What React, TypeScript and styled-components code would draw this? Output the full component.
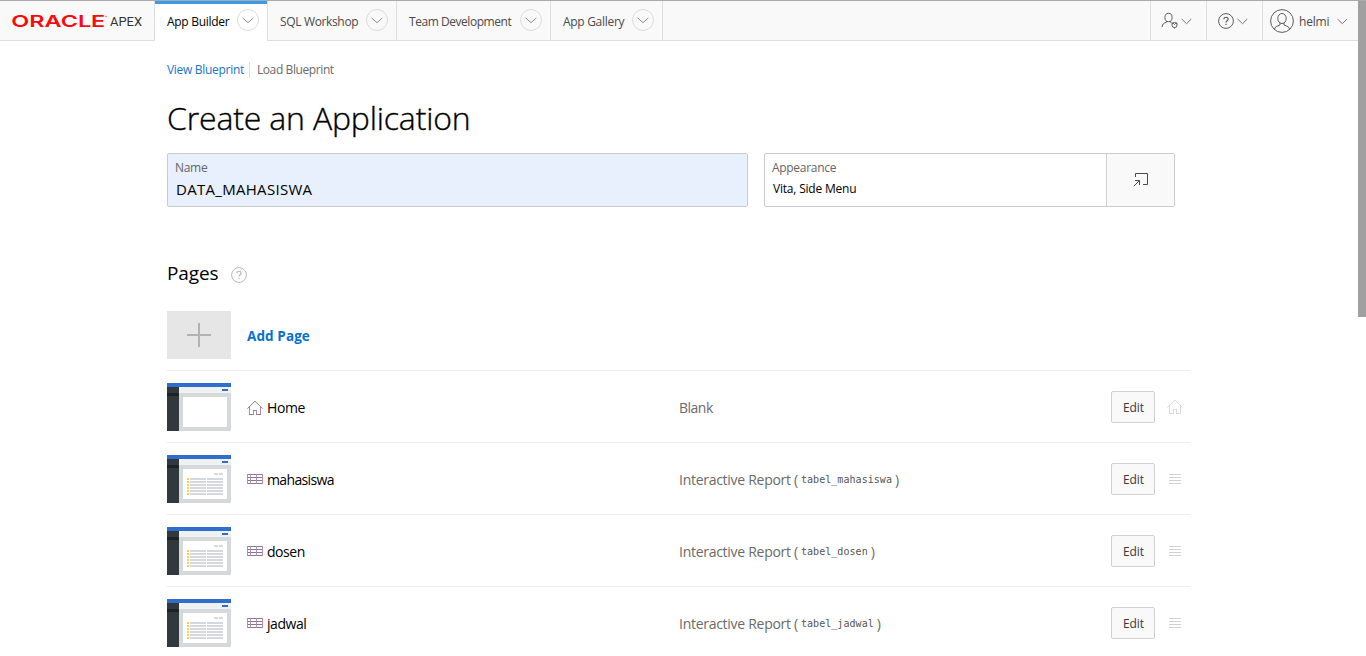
import React from "react";
import styled, { createGlobalStyle } from "styled-components";

const GlobalStyle = createGlobalStyle`
  * { box-sizing: border-box; }
  html, body { margin: 0; height: 100%; overflow: hidden; background: #fff; }
  body { font-family: "Open Sans", "Noto Sans", sans-serif; font-size: 12px; color: #000; }
`;

const Text = styled.span<{ $size?: number; $color?: string; $ls?: number; $weight?: number }>`
  font-size: ${(p) => p.$size ?? 12}px;
  color: ${(p) => p.$color ?? "inherit"};
  letter-spacing: ${(p) => p.$ls ?? 0}px;
  font-weight: ${(p) => p.$weight ?? 400};
  white-space: nowrap;
`;

const Screen = styled.div`
  display: flex;
  width: 1366px;
  height: 656px;
  overflow: hidden;
  border-top: 1px solid #ababab;
`;
const Page = styled.div`
  width: 1358px;
  flex: none;
`;
const ScrollTrack = styled.div`
  width: 8px;
  background: #fff;
`;
const ScrollThumb = styled.div`
  height: 316px;
  background: #a0a0a0;
`;

const Header = styled.header`
  display: flex;
  height: 40px;
  background: #f9f9f9;
`;
const Brand = styled.div`
  width: 155px;
  padding: 8px 0 0 11px;
  border-right: 1px solid #dfdfdf;
  border-bottom: 1px solid #dfdfdf;
`;
const Tab = styled.div<{ $width: number; $active?: boolean }>`
  width: ${(p) => p.$width}px;
  display: flex;
  justify-content: space-between;
  padding: 10px 8px 0 12px;
  line-height: 21px;
  color: ${(p) => (p.$active ? "#000" : "#4a4a4a")};
  background: ${(p) => (p.$active ? "#fff" : "transparent")};
  box-shadow: ${(p) => (p.$active ? "inset 0 3px 0 #3b9bea" : "none")};
  border-right: 1px solid #dfdfdf;
  border-bottom: ${(p) => (p.$active ? "none" : "1px solid #dfdfdf")};
`;
const RoundButton = styled.span`
  width: 22px;
  height: 22px;
  margin-top: -2px;
  border: 1px solid #dcdcdc;
  border-radius: 50%;
  display: flex;
  align-items: center;
  justify-content: center;
`;
const HeaderFill = styled.div`
  flex: 1;
  border-bottom: 1px solid #dfdfdf;
`;
const Tool = styled.div<{ $width: number; $gap?: number; $pad?: number }>`
  width: ${(p) => p.$width}px;
  display: flex;
  align-items: center;
  gap: ${(p) => p.$gap ?? 2}px;
  padding-top: 1px;
  padding-left: ${(p) => p.$pad ?? 10}px;
  border-left: 1px solid #dfdfdf;
  border-bottom: 1px solid #dfdfdf;
`;

const Main = styled.main`
  width: 1024px;
  margin-left: 167px;
`;
const Links = styled.nav`
  display: flex;
  align-items: center;
  padding-top: 20px;
  height: 37px;
`;
const LinkDivider = styled.span`
  width: 1px;
  height: 16px;
  margin: 0 7px 0 5px;
  background: #dcdcdc;
`;
const Title = styled.h1`
  margin: 17px 0 0;
  height: 58px;
  line-height: 46px;
  font-weight: 400;
  -webkit-text-stroke: 0.35px #000;
`;
const Fields = styled.div`
  display: flex;
  gap: 16px;
`;
const Field = styled.div<{ $width: number; $filled?: boolean }>`
  width: ${(p) => p.$width}px;
  height: 54px;
  display: flex;
  border: 1px solid #cbcbcb;
  border-radius: 2px;
  background: ${(p) => (p.$filled ? "#e8f0fe" : "#fff")};
`;
const FieldBody = styled.div`
  flex: 1;
  display: flex;
  flex-direction: column;
  padding: 5px 7px;
`;
const FieldLabel = styled.label`
  height: 19px;
  line-height: 17px;
`;
const FieldValue = styled.div`
  height: 22px;
  line-height: 22px;
  padding-left: 1px;
`;
const PickButton = styled.div`
  width: 68px;
  display: flex;
  align-items: center;
  justify-content: center;
  border-left: 1px solid #d0d0d0;
  background: #f9f9f9;
`;
const SectionHead = styled.div`
  display: flex;
  align-items: center;
  gap: 12px;
  height: 30px;
  margin-top: 51px;
`;
const HelpMark = styled.span`
  display: flex;
  padding-top: 4px;
`;
const List = styled.div`
  margin-top: 11px;
`;
const Row = styled.div`
  display: flex;
  align-items: center;
  height: 72px;
  border-bottom: 1px solid #ededed;
`;
const AddTile = styled.div`
  width: 64px;
  height: 48px;
  background: #e6e6e6;
  display: flex;
  align-items: center;
  justify-content: center;
`;
const NameCell = styled.div`
  width: 432px;
  margin-left: 16px;
  padding-top: 2px;
  display: flex;
  align-items: center;
  gap: 4px;
`;
const TypeCell = styled.div`
  width: 432px;
  padding-top: 2px;
  color: #6a6a6a;
  white-space: nowrap;
`;
const Code = styled.code`
  font-family: "DejaVu Sans Mono", monospace;
  font-size: 10px;
  letter-spacing: 0.05px;
  padding: 0 3px;
  position: relative;
  top: -2px;
  color: #555;
`;
const EditButton = styled.button`
  width: 44px;
  height: 32px;
  padding: 0 0 0 1px;
  font-family: inherit;
  border: 1px solid #d0d0d0;
  border-radius: 2px;
  background: #f9f9f9;
  color: #383838;
`;
const RowAction = styled.div`
  margin-left: 12px;
  width: 16px;
  display: flex;
  justify-content: center;
`;

const Chevron = ({ w = 11, color = "#777" }: { w?: number; color?: string }) => (
  <svg width={w} height="7" viewBox={`0 0 ${w} 7`} fill="none" stroke={color}>
    <path d={`M.7 1 L${w / 2} 5.7 L${w - 0.7} 1`} />
  </svg>
);

const HelpIcon = ({ color }: { color: string }) => (
  <svg width="16" height="16" viewBox="0 0 16 16" fill="none" stroke={color}>
    <circle cx="8" cy="8" r="7.4" />
    <path d="M5.9 6.3C5.9 3.6 10.1 3.6 10.1 6.2C10.1 7.8 8 7.7 8 9.6M8 10.8V12" strokeWidth="1.2" />
  </svg>
);

const HomeIcon = ({ color, wall }: { color: string; wall: string }) => (
  <svg width="16" height="16" viewBox="0 0 16 16" fill="none" stroke={color}>
    <path d="M.4 8.6 L8 1.2 L15.6 8.6M2 14.5H7M9 14.5H14M6 10.5H10" />
    <path d="M2.5 7V14M6.5 11V14M9.5 11V14M13.5 7V14" stroke={wall} />
  </svg>
);

const TableIcon = () => (
  <svg width="16" height="16" viewBox="0 0 16 16" fill="none" shapeRendering="crispEdges">
    <path d="M0 2.5H16M0 5.5H16M0 8.5H16M0 11.5H16" stroke="#7c7c7c" />
    <path d="M.5 2V12M3.5 2V12M9.5 2V12M15.5 2V12" stroke="#b58abd" />
  </svg>
);

const DragIcon = () => (
  <svg width="12" height="12" viewBox="0 0 12 12" stroke="#d2d2d2" shapeRendering="crispEdges">
    <path d="M0 1.5H12M0 4.5H12M0 7.5H12M0 10.5H12" />
  </svg>
);

const PageThumb = ({ report }: { report?: boolean }) => (
  <svg width="64" height="48" viewBox="0 0 64 48" shapeRendering="crispEdges">
    <rect width="64" height="48" fill="#d5d9dc" />
    <rect y="4" width="64" height="6" fill="#f0f1f1" />
    <rect width="64" height="4" fill="#2f6fcb" />
    <rect y="4" width="12" height="44" fill="#32393d" />
    <rect y="10" width="12" height="3" fill="#1c2225" />
    <rect x="55" y="6" width="6" height="2" fill="#2f6fcb" />
    <rect x="16" y="14" width="44" height="30" fill="#fff" />
    {report && (
      <g fill="#d5d9dc">
        <rect x="47" y="18" width="4" height="2" />
        <rect x="52" y="18" width="4" height="2" />
        {[23, 26, 29, 32, 35, 38].map((y) => (
          <g key={y}>
            <rect x="20" y={y} width="2" height="2" fill="#fbce4a" />
            <rect x="23" y={y} width="16" height="2" />
            <rect x="40" y={y} width="16" height="2" />
          </g>
        ))}
      </g>
    )}
  </svg>
);

const UserAdminIcon = () => (
  <svg width="18" height="18" viewBox="0 0 18 18" fill="none" stroke="#5c5c5c">
    <ellipse cx="7.5" cy="5.5" rx="3.6" ry="4.2" />
    <path d="M1.2 15C1.2 12 2.6 11.3 5.6 10.2V9M9.4 9V10.2L10.5 10.6" />
    <circle cx="13.5" cy="13" r="2.6" />
    <path d="M10.5 11.2H12.2L13.5 12.5L14.8 11.2H16.5M13.5 15.4V16.5" />
  </svg>
);

const AvatarIcon = () => (
  <svg width="24" height="24" viewBox="0 0 24 24" fill="none" stroke="#5c5c5c">
    <circle cx="12" cy="12" r="11.4" />
    <ellipse cx="12" cy="9.5" rx="4.2" ry="5" />
    <path d="M4.5 20.5C4.8 17.5 6.8 17.3 10 16V13.8M14 13.8V16C17.2 17.3 19.2 17.5 19.5 20.5" />
  </svg>
);

const PickIcon = () => (
  <svg width="16" height="16" viewBox="0 0 16 16" fill="none" stroke="#4a4a4a">
    <path d="M2.5 5V1.5H14.5V12.5H10" />
    <path d="M.8 14.2L6.5 8.5M2 8.5H6.5V13" />
  </svg>
);

const Logo = () => (
  <svg width="136" height="26" viewBox="0 0 136 26" fontFamily="Inter, sans-serif">
    <text x="0.3" y="18" fontSize="16.5" fontWeight="600" fill="#fa0a0a" textLength="94" lengthAdjust="spacingAndGlyphs">ORACLE</text>
    <circle cx="95" cy="7.5" r=".8" fill="#f66" />
    <text x="99" y="17.2" fontSize="13" fill="#333" fontFamily="Roboto, sans-serif" textLength="32" lengthAdjust="spacingAndGlyphs">APEX</text>
  </svg>
);

const tabs = [
  { label: "App Builder", width: 113, active: true, ls: -0.3 },
  { label: "SQL Workshop", width: 129, ls: -0.35 },
  { label: "Team Development", width: 154, ls: -0.45 },
  { label: "App Gallery", width: 112, ls: -0.3 },
];

const pages = [
  { name: "Home", ls: -0.4 },
  { name: "mahasiswa", table: "tabel_mahasiswa", ls: -0.65 },
  { name: "dosen", table: "tabel_dosen", ls: -0.45 },
  { name: "jadwal", table: "tabel_jadwal", ls: -0.45 },
];

export default function App() {
  return (
    <>
      <GlobalStyle />
      <Screen>
        <Page>
          <Header>
            <Brand><Logo /></Brand>
            {tabs.map((t) => (
              <Tab key={t.label} $width={t.width} $active={t.active}>
                <Text $ls={t.ls}>{t.label}</Text>
                <RoundButton><Chevron w={12} color="#8a8a8a" /></RoundButton>
              </Tab>
            ))}
            <HeaderFill />
            <Tool $width={56}><UserAdminIcon /><Chevron /></Tool>
            <Tool $width={56} $pad={11} $gap={3}><HelpIcon color="#5c5c5c" /><Chevron /></Tool>
            <Tool $width={96} $pad={7} $gap={5}>
              <AvatarIcon />
              <Text $color="#4a4a4a" $ls={-0.2}>helmi</Text>
              <svg width="15" height="7" viewBox="0 0 15 7" fill="none" stroke="#777">
                <path d="M3.5 1L8.3 5.7L13.1 1" />
              </svg>
            </Tool>
          </Header>
          <Main>
            <Links>
              <Text $color="#1a73cc" $ls={-0.3}>View Blueprint</Text>
              <LinkDivider />
              <Text $color="#6a6a6a" $ls={-0.4}>Load Blueprint</Text>
            </Links>
            <Title><Text $size={32} $weight={300} $ls={-0.17}>Create an Application</Text></Title>
            <Fields>
              <Field $width={581} $filled>
                <FieldBody>
                  <FieldLabel><Text $color="#666" $ls={-0.3}>Name</Text></FieldLabel>
                  <FieldValue><Text $size={15} $ls={0.3}>DATA_MAHASISWA</Text></FieldValue>
                </FieldBody>
              </Field>
              <Field $width={411}>
                <FieldBody>
                  <FieldLabel><Text $color="#666" $ls={-0.3}>Appearance</Text></FieldLabel>
                  <FieldValue><Text $ls={-0.2}>Vita, Side Menu</Text></FieldValue>
                </FieldBody>
                <PickButton><PickIcon /></PickButton>
              </Field>
            </Fields>
            <SectionHead>
              <Text $size={19} $ls={-0.1}>Pages</Text>
              <HelpMark><HelpIcon color="#b8b8b8" /></HelpMark>
            </SectionHead>
            <List>
              <Row>
                <AddTile>
                  <svg width="24" height="24" viewBox="0 0 24 24" fill="#b2b2b2" shapeRendering="crispEdges">
                    <rect x="0" y="11" width="24" height="2" />
                    <rect x="11" y="0" width="2" height="24" />
                  </svg>
                </AddTile>
                <NameCell><Text $size={13.5} $ls={0.1} $weight={700} $color="#0572ce">Add Page</Text></NameCell>
              </Row>
              {pages.map((p) => (
                <Row key={p.name}>
                  <PageThumb report={!!p.table} />
                  <NameCell>
                    {p.table ? <TableIcon /> : <HomeIcon color="#858585" wall="#b08ab8" />}
                    <Text $size={14} $ls={p.ls}>{p.name}</Text>
                  </NameCell>
                  <TypeCell>
                    {p.table ? (
                      <Text $size={14} $ls={-0.28}>
                        Interactive Report (<Code>{p.table}</Code>)
                      </Text>
                    ) : (
                      <Text $size={14} $ls={-0.5}>Blank</Text>
                    )}
                  </TypeCell>
                  <EditButton><Text $ls={-0.1}>Edit</Text></EditButton>
                  <RowAction>{p.table ? <DragIcon /> : <HomeIcon color="#dadada" wall="#e2d4e6" />}</RowAction>
                </Row>
              ))}
            </List>
          </Main>
        </Page>
        <ScrollTrack><ScrollThumb /></ScrollTrack>
      </Screen>
    </>
  );
}
